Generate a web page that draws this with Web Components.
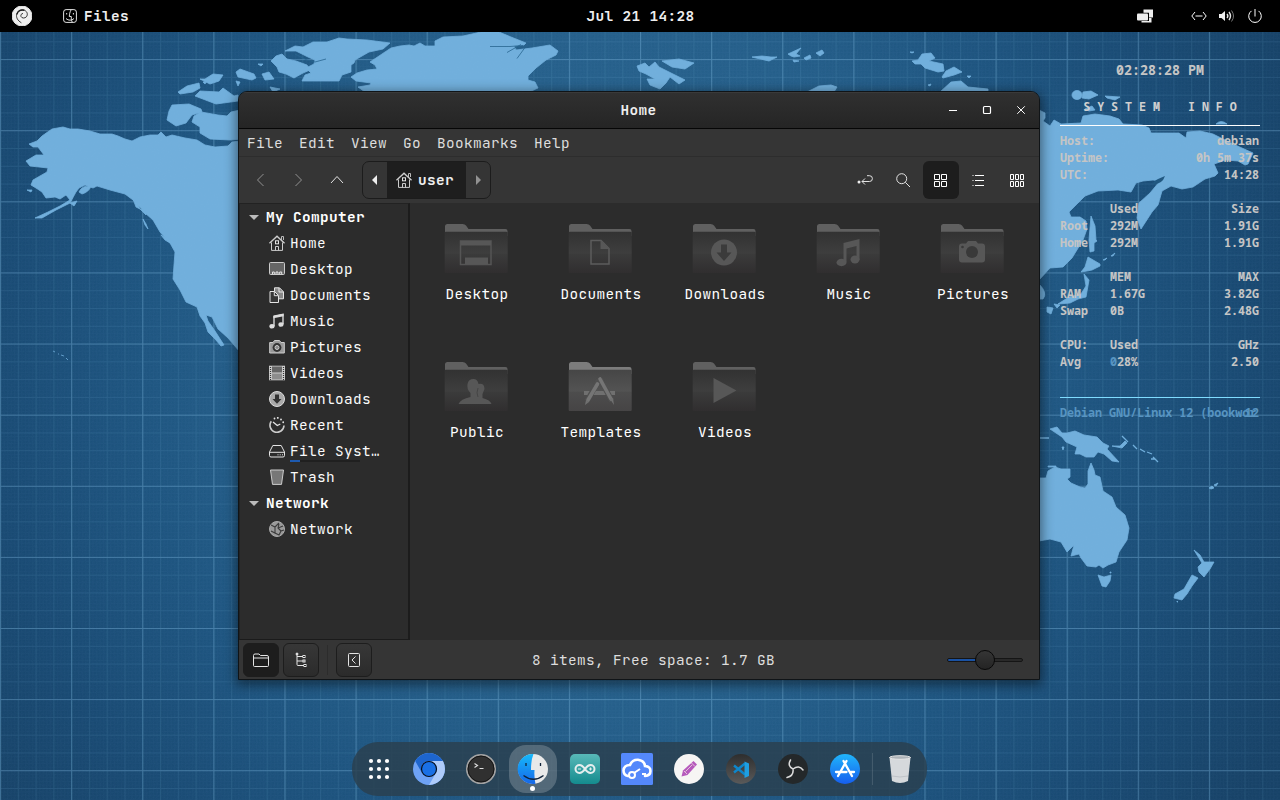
<!DOCTYPE html>
<html lang="en"><head><meta charset="utf-8"><title>Desktop</title>
<style>html,body{margin:0;width:1280px;height:800px;overflow:hidden;background:#1d527c;font:14.400px/20px "JetBrains Mono","DejaVu Sans Mono",monospace;letter-spacing:.36px;color:#eee}</style></head>
<body><desk-top></desk-top>
<script>
const define=(name,html)=>customElements.define(name,class extends HTMLElement{constructor(){super();this.attachShadow({mode:'open'}).innerHTML=typeof html==='function'?html(this):html}});

/* symbolic icons, 16-unit grid unless a view box is given */
const ICONS={
debian:[20,'<circle cx="10" cy="10" r="10" fill="#eee"/><path d="M9.400 16.800C5.500 14.500 4 11.500 4.700 8.200C5.700 4.800 9.500 3 12.700 4.400C15.500 5.700 16 8.800 14.400 10.800C13 12.500 9.700 12.400 9 10.500C8.500 8.800 9.500 7.500 11 7.500" fill="none" stroke="#222" stroke-width=".9"/><path d="M4.900 8.500C5.500 4.800 9 3.200 12.300 4.300" fill="none" stroke="#222" stroke-width="1.500"/>'],
finder:[14,'<rect x=".6" y=".6" width="12.800" height="12.800" rx="2.500"/><path d="M8 1C6.700 3.500 6.500 5 6.300 7.500H8.300C8.200 10 8.500 11.500 9.200 13M3 9.500C5.500 11.700 8.500 11.700 11 9.500M3.700 4v1.500M10.400 4v1.500"/>'],
screens:[16,'<path d="M6.500 1.500h9.500v8h-4V4.800H6.500zM4.500 13h7.500v-3h2.500v4.500h-10z" fill="#eee" stroke="none"/><rect x="0" y="5.500" width="11" height="7" rx="1" fill="#eee" stroke="none"/>'],
wired:[16,'<path d="M4 4L.8 8L4 12M12 4l3.200 4L12 12M4.500 8h7" stroke="#fff"/>'],
sound:[16,'<path d="M0 6h2.500L6 3v10L2.500 10H0z" fill="#eee" stroke="none"/><path d="M8 6q1.700 2 0 4M10 4q3 4 0 8" stroke-width="1.400"/><path d="M12.500 2.500q4 5.500 0 11" stroke="#777"/>'],
power:[14,'<path d="M3.500 1.900A6.300 6.300 0 1 0 10.500 1.900M7 0v7.500" stroke="#fff"/>'],
min:[16,'<path d="M4 8.500h8" stroke="#fff"/>'],
max:[16,'<rect x="4.500" y="4.500" width="7" height="7" rx="1" stroke="#fff" stroke-width="1.200"/>'],
close:[16,'<path d="M4.300 4.300l7.500 7.500M11.800 4.300l-7.500 7.500" stroke="#fff"/>'],
back:[16,'<path d="M10.500 2L4.500 8l6 6" stroke="#929292"/>'],
fwd:[16,'<path d="M4.500 2l6 6l-6 6" stroke="#929292"/>'],
up:[16,'<path d="M2 11l6-6.500l6 6.500"/>'],
pl:[10,'<path d="M7 0v10L2 5z" fill="#eee" stroke="none"/>'],
pr:[10,'<path d="M3 0v10l5-5z" fill="#929292" stroke="none"/>'],
home:[16,'<path d="M.4 8.300L8 1.200l7.600 7.100" stroke="#ccc" stroke-width="1.500"/><path d="M2.500 7.500v7.900h11V7.500M6.500 15.500v-4h3v4" stroke="#ccc"/><path d="M7 12h2v3H7z" fill="#2b2b2b" stroke="none"/><rect x="6.500" y="5.800" width="3" height="3"/><path d="M12.500 5V1.500h2V5" stroke="#bbb"/>'],
desk:[16,'<rect x=".5" y="1.500" width="15" height="12" rx="1" fill="#666" stroke="#ccc"/><path d="M3.500 13v-2h1.800v2M7 13v-2h2v2M10.700 13v-2h2v2"/>'],
docs:[16,'<path d="M5.500.8h5l4 4v7h-9z" fill="#888"/><path d="M10 1v4h4"/><path d="M1 4.500h4.500l4 4v7H1z" fill="#373737"/><path d="M5.300 4.700v4h4"/>'],
music:[16,'<path d="M5 13V3.500l9-2V11" stroke-width="1.300"/><path d="M4.400 2.500l10.200-2v2.800l-10.200 2z" fill="#ddd" stroke="none"/><ellipse cx="3" cy="13.200" rx="2.600" ry="2.300" fill="#ddd" stroke="none"/><ellipse cx="12" cy="11.500" rx="2.600" ry="2.300" fill="#ddd" stroke="none"/>'],
camera:[16,'<path d="M.7 3.500h3.300l1.500-2h5l1.500 2h3.300v10.500H.7z" fill="#999" stroke="#ccc"/><circle cx="8" cy="8.500" r="4.400" fill="#333" stroke="none"/><circle cx="8" cy="8.500" r="2" fill="#888" stroke="#ccc"/>'],
video:[16,'<path d="M0 .7h16v14.600H0z" fill="#ccc" stroke="none"/><path d="M3 1.500h10v6H3z" fill="#666" stroke="none"/><path d="M3 8.500h10v6H3z" fill="#8d8d8d" stroke="none"/><path d="M1.500 2v13M14.500 2v13" stroke="#333" stroke-width="1.200" stroke-dasharray="1 1"/>'],
down:[16,'<circle cx="8" cy="8" r="7.500" fill="#aaa" stroke="#ddd"/><path d="M6 3.500h4V8h2.500L8 12.700L3.500 8H6z" fill="#333" stroke="none"/>'],
recent:[16,'<path d="M2.300 4.200A7 7 0 1 0 15 8.500" stroke-width="1.600" stroke="#ccc"/><path d="M4 5l4.300 3.500l3-1.500" stroke-width="1.300"/><path d="M5.500 1.500v.1M8.800 .8v.1M12 2.500v.1M14.200 5.200v.1" stroke-width="1.800" stroke-linecap="round"/>'],
disk:[16,'<path d="M3.800 2.500h8.400L15.500 9v3.500q0 1.500-1.500 1.500H2Q.5 14 .5 12.500V9z"/><path d="M.8 9.300h14.400M8.500 11.800h1M10.700 11.800h1M13 11.800h1"/>'],
trash:[16,'<path d="M1.500 1h13l-2 14.400H3.500z" fill="#777" stroke="#ccc"/>'],
net:[16,'<circle cx="8" cy="8" r="7.500" fill="#999" stroke="#aaa"/><path d="M2 4l4 2l4-4M6 6v6l-4-2M6 12l4 2l2-4l3-1M10 3l-1 4l3 3M9 7l5-2" stroke="#3b3b3b" stroke-width="1.100"/>'],
path:[16,'<path d="M5 9.500h7.500a2.900 2.900 0 0 0 0-5.800H10M8 6.500l-3 3l3 3"/><circle cx="2" cy="10" r="1.500" fill="#eee" stroke="none"/>'],
search:[16,'<circle cx="6.700" cy="6.700" r="5"/><path d="M10.300 10.300l4.700 4.700"/>'],
grid4:[16,'<path d="M1.500 2.500h5v5h-5zM8.500 2.500h5v5h-5zM1.500 9.500h5v5h-5zM8.500 9.500h5v5h-5z" stroke="#fff"/>'],
list:[16,'<path d="M4 3.500h9M4 8.500h9M4 13.500h9M1.500 3.500h1M1.500 8.500h1M1.500 13.500h1" stroke="#fff"/>'],
grid6:[16,'<path d="M1.500 2.500h3v5h-3zM6.500 2.500h3v5h-3zM11.500 2.500h3v5h-3zM1.500 9.500h3v5h-3zM6.500 9.500h3v5h-3zM11.500 9.500h3v5h-3z" stroke="#fff"/>'],
folder:[16,'<path d="M.5 13V3.500q0-1.500 1.500-1.500h4l1.500 1.500H14q1.500 0 1.500 1.500v8.500q0 1-1 1H1.500q-1 0-1-1zM.5 6h15"/>'],
tree:[16,'<path d="M4 2v10.500q0 1 1 1h6M4 4.500h6M4 9h6"/><circle cx="4" cy="2" r="1" fill="#eee"/><rect x="10" y="3.500" width="2" height="2"/><rect x="10" y="8" width="2" height="2"/><rect x="11" y="12.500" width="2" height="2"/>'],
pane:[16,'<rect x="2.500" y="1.500" width="11" height="13" rx="1"/><path d="M9.500 4.500L6 8l3.500 3.500"/>']};
define('ui-icon',e=>{const [v,s]=ICONS[e.getAttribute('name')],z=e.getAttribute('size')||v;return `<style>:host{display:block;width:${z}px;height:${z}px;flex:none}svg{display:block}</style><svg width="${z}" height="${z}" viewBox="0 0 ${v} ${v}" fill="none" stroke="#e4e4e4">${s}</svg>`});

define('wall-paper',`<style>:host{display:block;width:1280px;height:800px}</style>
<svg width="1280" height="800"><defs>
<radialGradient id="g" gradientUnits="userSpaceOnUse" cx="610" cy="370" r="760"><stop offset="0" stop-color="#2b6690"/><stop offset=".45" stop-color="#255f8a"/><stop offset=".62" stop-color="#1e5580"/><stop offset=".82" stop-color="#194a73"/><stop offset="1" stop-color="#174267"/></radialGradient>
<pattern id="f" width="3.556" height="3.556" patternUnits="userSpaceOnUse" y="-12"><path d="M0 .5h4M.5 0v4" stroke="#79b4dc" stroke-opacity=".03"/></pattern>
<pattern id="q" width="17.778" height="17.778" patternUnits="userSpaceOnUse" y="-12"><path d="M0 .6h18M.6 0v18" stroke="#79b4dc" stroke-opacity=".11"/></pattern>
<pattern id="m" width="71.111" height="71.111" patternUnits="userSpaceOnUse" y="-12"><path d="M0 .6h72M.6 0v72" stroke="#8ac2e8" stroke-opacity=".3"/></pattern>
<filter id="n"><feTurbulence type="fractalNoise" baseFrequency=".7" numOctaves="2"/><feColorMatrix values="0 0 0 0 .4 0 0 0 0 .6 0 0 0 0 .8 .25 0 0 0 -.08"/></filter></defs>
<rect width="1280" height="800" fill="url(#g)"/><rect width="1280" height="800" fill="url(#f)"/><rect width="1280" height="800" fill="url(#q)"/><rect width="1280" height="800" fill="url(#m)"/>
<g fill="#71afdc" stroke="#71afdc" stroke-width=".8" stroke-linejoin="round">
<path d="M242 142L228 146 215 147 205 145 197 140 185 138 172 135 166 137 161 132 158 135 150 135 140 137 132 141 125 139 118 136 112 134 100 134 90 131 78 129 70 129 63 127 52 129 42 136 37 141 29 144 33 147 38 147 44 155 36 155 26 161 30 166 48 168 47 172 33 180 31 185 36 188 42 192 46 198 55 197 60 199 66 195 70 200 60 206 48 212 35 218 42 218 56 210 70 203 76 192 79 188 85 185 93 188 97 186 110 190 125 194 133 200 140 207 145 213 153 220 160 232 170 243 175 252 174 265 173 279 180 290 186 302 197 307 200 316 205 323 208 332 215 339 221 346 224 345 215 331 208 321 206 315 212 317 218 329 228 338 240 352Z"/>
<path d="M79 192q3-7 12-6-2 6-9 8zM70 203l7-2-3 5zM27 190l5 0-1 2z"/>
<path d="M161 235l12 6 5 6-3-1-10-6zM133 199l4 3 3 7-4-2zM140 209l5 1 1 5zM143 219l3 5 2 5-3-4z"/>
<path d="M172 105l17-1 12 5 1 3-10 3-6 8-10 3-9-6 2-9zM178 92l9-6 12-3 1 5-7 4-13 2zM200 79l5 0 8-5 10 1-4 6-9 3zM203 82l4-1-2 3zM236 72l4-3 14 5 2 4-4 2-14-3zM258 64l5 0-2 2zM262 74l7-2 5 7-9 1zM270 87l10 2-7 3zM195 96l5-5 19 1 4-4 11 8 4-1v6l-22 3zM240 110l-9 2-4 4-9-1-17-3-7 4-2 6 8 5 0 6 10 6 20 1 12-1zM240 141l-8 1-5 5 3 2 5-4 5-1zM236 81l4 1-2 4z"/>
<path d="M271 61l5-5 6-2 5 5 9 2 11 4 3 5-7 3-9 5-8-4-7-2-2-5z"/>
<path d="M285 51l10-5 8 1 10-5 14 0 12-4 8 1 20 1 23 3-7 6-14 3-14 8-1 3-3 2 0 7-9 3-3 6h-37l3-6 6-2-5-5 8-4 1-4-7-3-12-6z"/><path d="M295 54l12 6 8 2 11-3" fill="none" stroke="#27648f"/>
<path d="M391 48L400 46l9-1 5 1 6-3 5 3 10 0 0-5 8-4 20-1 18-4h18l12 5 15 6-2 2-10 1 2 4 16-2 18-3 8 6-2 4-10 5-10 8-8 8 0 4 7 2 3 6-9 4H365l-7-5 12-2 1-2-15-2-5-4 6-4 10-3 10-1-2-4-5-3z"/>
<path d="M490 46.500l20 0 13-1m-16 7l14-8m-4 14 8-11" fill="none" stroke="#27648f"/>
<path d="M637 66l8-3 4 4 6-5 4 5 8 4 10 5 8 4-6 4-9-7-4 6-6 6-10-4-3-6 8 0-9-5-7-3zM662 61l17-2 15 4-9 6-13-2zM752 57l10-1 9 1 6 0-8 4-13-3zM788 54l13-6-5 6 4 2-6 1-3-1zM793 60l6 1-5 1zM804 58l6-3 1 3-5 2zM816 53l6-3 2 3-4 3z"/><path d="M912 61l6-1 4-6 9-1 4 5-6 3 14 3 1 7-6 1-13-4-4-4-6 0zM942 77l4-6 8-4 8 5-8 3-11 3zM807 92l12-6 12-1 6 2-3 5zM940 92l11-10 10-1 7 6 20 2v3zM910 52l4 0-2 1zM967 76l4 0-2 2zM928 85l3-1-1 2z"/>
<path d="M1039 110L1045 113 1045 118 1043 121 1050 126 1054 120 1061 124 1081 123 1083 116 1095 114 1110 116 1119 119 1123 124 1142 125 1149 128 1151 133 1179 133 1186 138 1187 132 1200 131 1213 134 1233 144 1253 153 1248 164 1245 165 1238 161 1226 160 1214 164 1218 173 1215 176 1205 179 1193 187 1182 189 1171 186 1162 191 1158 205 1152 212 1141 229 1137 218 1139 203 1150 193 1160 181 1153 180 1143 181 1136 183 1131 192 1118 190 1098 191 1085 196 1069 212 1071 217 1080 217 1086 221 1087 229 1083 240 1072 258 1063 267 1050 268 1039 280Z"/><path d="M1165 176q-3 9-13 8 3-4 6-5z" fill="#205780" stroke="none"/>
<ellipse cx="1077" cy="95" rx="5" ry="4.500"/><path d="M1083 92l8-1 7 4-9 4-7-1zM1105 96l15 1-5 3-8-2zM1085 109l7-3 3 4-6 1zM1216 124q5-5 11 0zM1039 284q9 9 4 15h-4zM1091 216l4 10 1 14 1 1-3 2 0 8-4 1-1-12zM1088 257l12 7 0 2-8 4-5 1-6 1 4-5zM1084 274l5 6-3 17-8 2-8 4-12 1 11-7 12-3 5-8zM1047 307l6 1-2 6-4-2zM1054 304l6 1-3 3zM1103 260l4-2-2 2zM1111 256l4-3-2 3z"/>
<path d="M1050 429L1057 427 1062 433 1067 433 1075 431 1084 435 1097 437 1103 443 1109 446 1107 449 1119 462 1112 461 1104 454 1098 452 1094 457 1086 457 1080 454 1075 454 1077 447 1066 442 1062 437ZM1112 446l8 0 5-5 2 2-5 5zM1062 447l2 0-1 3z"/><path d="M1122 436l6 6m5 3l4 4m3 0l5 3m2 0 5 2m1 3 5 5m-7-3 4 0M1039 438h10" fill="none" stroke-width="1.300"/>
<path d="M1039 478L1046 478 1048 471 1055 467 1061 469 1070 469 1070 477 1067 479 1071 483 1080 487 1085 488 1088 484 1088 471 1091 463 1094 470 1095 475 1100 477 1103 491 1112 497 1116 507 1125 515 1129 528 1127 540 1119 552 1116 562 1108 565 1103 568 1099 565 1096 567 1087 566 1081 558 1079 554 1071 556 1074 545 1067 552 1061 542 1050 539 1039 541ZM1048 466h8v1h-8zM1098 575l6 2 7-2-1 6-4 6-4-1zM1110 572h1v1h-1z"/>
<path d="M1194 550L1200 555 1204 562 1214 562 1210 569 1204 577 1199 572 1198 567 1202 563ZM1192 575L1198 578 1192 586 1187 594 1182 600 1174 598 1175 594 1184 589 1188 582ZM1209 488l3-2 2 2-3 1zM1214 485l4-2-2 3zM1177 601l1 1-1 0z"/>
<path d="M53 351l2 1m3 2l1 0m2 1 3 1m2 2 2 2" fill="none"/>
</g><rect width="1280" height="800" filter="url(#n)" opacity=".2"/></svg>`);

define('top-bar',`<style>:host{display:flex;align-items:center;height:32px;background:#000;font-weight:bold;box-sizing:border-box;padding:0 18px 0 12px}
.l,.r{display:flex;align-items:center;flex:1 1 0}.l{margin-right:7px}.r{justify-content:flex-end}.f{margin:0 7px 0 31px}.w{margin-left:38px}.s{margin-left:12px}.p{margin-left:13px}</style>
<div class="l"><ui-icon name="debian"></ui-icon><ui-icon class="f" name="finder"></ui-icon><span>Files</span></div><time>Jul 21 14:28</time>
<div class="r"><ui-icon name="screens"></ui-icon><ui-icon class="w" name="wired"></ui-icon><ui-icon class="s" name="sound"></ui-icon><ui-icon class="p" name="power"></ui-icon></div>`);

define('info-row',e=>`<style>:host{display:grid;grid-template-columns:50px 1fr auto;height:17px;white-space:nowrap}b{color:#5794c1}</style><span>${e.getAttribute('a')||''}</span><span>${e.getAttribute('b')||''}</span><span>${e.getAttribute('c')||''}</span>`);
define('sys-info',`<style>:host{display:block;width:200px;font:bold 11.700px/17px "Noto Sans Mono","DejaVu Sans Mono",monospace;letter-spacing:0;color:#c5c5c5}
.t{text-align:center;font-size:13.300px;height:20px;line-height:20px}.h{white-space:pre;text-align:center;margin-top:18px;line-height:17px;height:17px;letter-spacing:-.03px;color:#d0d0d0}
.hr{height:1px;background:#fff;margin:10px 0 6px}.e{height:17px}.b{background:#7fdcff;margin:27px 0 6px}info-row{margin-right:1px}.d{display:grid;color:#5794c1;white-space:nowrap;margin-right:1px}.d span{grid-area:1/1}.d span+span{justify-self:end}</style>
<div class="t">02:28:28 PM</div><div class="h">S Y S T E M    I N F O</div><div class="hr"></div>
<info-row a="Host:" c="debian"></info-row><info-row a="Uptime:" c="0h 5m 37s"></info-row><info-row a="UTC:" c="14:28"></info-row><div class="e"></div>
<info-row b="Used" c="Size"></info-row><info-row a="Root" b="292M" c="1.91G"></info-row><info-row a="Home" b="292M" c="1.91G"></info-row><div class="e"></div>
<info-row b="MEM" c="MAX"></info-row><info-row a="RAM" b="1.67G" c="3.82G"></info-row><info-row a="Swap" b="0B" c="2.48G"></info-row><div class="e"></div>
<info-row a="CPU:" b="Used" c="GHz"></info-row><info-row a="Avg" b="&lt;b&gt;0&lt;/b&gt;28%" c="2.50"></info-row><div class="hr b"></div>
<div class="d"><span>Debian GNU/Linux 12 (bookwor</span><span>12</span></div>`);

define('side-item',e=>`<style>:host{display:flex;align-items:center;height:26px;padding-left:29px;gap:5px;color:#fafafa}.n{position:relative;white-space:nowrap}.u{position:absolute;left:0;top:19px;width:70px;height:2px;background:linear-gradient(90deg,#1d5ab0 10px,#202020 10px)}</style><ui-icon name="${e.getAttribute('icon')}"></ui-icon><span class="n"><slot></slot>${e.hasAttribute('usage')?'<i class="u"></i>':''}</span>`);
define('side-head',`<style>:host{display:flex;align-items:center;height:26px;padding-left:9px;gap:7px;font-weight:bold;color:#fff}i{border:5px solid transparent;border-top-color:#bbb;border-bottom:0}</style><i></i><span><slot></slot></span>`);

const G={
desktop:'<path d="M16.500 18h30.500v23.500H16.500z" fill="none" stroke="#555" stroke-width="1.500"/><path d="M16.500 18h30.500v4.500H16.500zM21 34.500h23v7H21z"/>',
documents:'<path d="M23 17.500h10l8 8v15.500h-18z" fill="none" stroke="#5c5c5c" stroke-width="1.500"/><path d="M32.500 17l9 9h-9z"/>',
downloads:'<circle cx="32" cy="29.500" r="13"/><path d="M29 21.500h6v8h4.500L32 38l-7.500-8.500H29z" fill="#3b3b3b"/>',
music:'<path d="M27.500 20l16-4v21h-3V23l-10 2.500V39h-3z"/><ellipse cx="25.500" cy="39.500" rx="5" ry="3.700"/><ellipse cx="39" cy="36.500" rx="4.500" ry="4"/>',
pictures:'<path d="M22 20.500h4l2-2.500h8l2 2.500h4q3 0 3 3v13q0 3-3 3H22q-3 0-3-3v-13q0-3 3-3z"/><circle cx="32" cy="29" r="6" fill="#393939"/><circle cx="22.500" cy="24" r="1.300" fill="#393939"/>',
public:'<path d="M14.500 43q2-5 12-7v-4q-4-4-3-9 1-5 6-5 4 0 5 5 6-1 6 5l-2 5v4q8 2 9 6z"/><path d="M34 27q-2 5 0 9" stroke="#454545" fill="none"/>',
templates:'<path d="M16 30h31v4H16z"/><path d="M19 40l12-21M44 40L32 18" stroke="#505050" stroke-width="5.500"/><path d="M20 39l9.500-16M43 38L32 18" stroke="#757575" stroke-width="3.600" stroke-linecap="round"/><path d="M17 44l1-5 3 2zM42 38l4 6-1-7z"/>',
videos:'<path d="M21.500 17v25l23-12.500z"/>'};
define('folder-item',e=>{const k=e.getAttribute('kind'),t=k=='templates';return `<style>:host{display:flex;flex-direction:column;align-items:center;height:138px}svg{display:block;margin-top:19px}span{margin-top:9px;padding-left:2px}</style>
<svg width="64" height="53" viewBox="0 0 64 53"><defs><linearGradient id="x" x2="0" y2="1"><stop stop-color="${t?'#464646':'#323232'}"/><stop offset=".52" stop-color="${t?'#535353':'#3e3e3e'}"/><stop offset=".54" stop-color="${t?'#4d4d4d':'#3b3b3b'}"/><stop offset="1" stop-color="${t?'#464445':'#302e2f'}"/></linearGradient></defs>
<path d="M1 10V4.500Q1 2 3.500 2H18.500q2.500 0 3.500 1.500L24.500 7H61.500q2 0 2 2v5H1z" fill="${t?'#7c7c7c':'#606060'}"/><path d="M.7 10.500q0-.8 1-.8h60.500q1.500 0 1.500 1V50q0 1-1 1H1.700Q.7 51 .7 50z" fill="url(#x)"/><g transform="translate(0 1)" fill="${t?'#707070':'#575757'}">${G[k]}</g></svg><span><slot></slot></span>`});

define('file-window',`<style>:host{display:flex;flex-direction:column;width:800px;height:587px;border:1px solid #101417;border-radius:9px 9px 0 0;overflow:hidden;background:#2c2c2c;box-shadow:0 3px 12px 2px #0007;background-clip:padding-box}
.title{height:37px;display:grid;grid-template-columns:119px 1fr 120px;align-items:center;background:linear-gradient(#303030,#252525);box-shadow:inset 0 1px #3a3a3a;text-align:center;font-weight:bold;border-bottom:1px solid #060606;box-sizing:border-box;flex:none}
.wb{display:flex;gap:18px;padding-left:26px}.m{display:flex;gap:16px;height:28px;padding:1px 8px 0;align-items:center;background:#353535;border-bottom:1px solid #2d2d2d;box-sizing:border-box;color:#ddd}
.tb{height:46px;background:#353535;display:flex;align-items:center;padding:0 4px;gap:2px;box-sizing:border-box}.b{width:36px;height:38px;display:flex;align-items:center;justify-content:center;border-radius:6px;flex:none}.on{background:#1d1d1d}
.pb{margin-left:5px;display:flex;height:38px;width:129px;box-sizing:border-box;border:1px solid #1c1c1c;border-radius:7px;overflow:hidden;margin-right:auto;font-weight:bold}.pb>div{display:flex;align-items:center;justify-content:center;width:24px}.pb .c{width:79px;gap:6px;background:#1e1e1e;padding-right:3px;box-sizing:border-box}
.main{display:flex;flex:1;min-height:0}.side{width:168px;border-right:2px solid #1c1c1c;border-left:1px solid #222;border-top:1px solid #222;border-bottom:1px solid #1b1b1b;display:flex;flex-direction:column}
.grid{flex:1;display:grid;grid-template-columns:repeat(5,124px);grid-auto-rows:138px;padding-left:4px;color:#fff}
.st{height:39px;flex:none;background:#353535;display:grid;grid-template-columns:133px 1fr 92px;align-items:center}.sb{display:flex;padding-left:4px;gap:4px}.sb .b{height:34px;box-sizing:border-box;border:1px solid #1d1d1d;background:linear-gradient(#373737,#2b2b2b)}.sb .b.on{background:#1d1d1d}.sb .k{margin-left:13px;position:relative}.k:before{content:"";position:absolute;left:-10px;top:1px;height:30px;border-left:1px solid #2c2c2c}.x{text-align:center;padding-right:12px;padding-top:1px;color:#ddd}
.sl{height:4px;width:76px;border-radius:3px;box-sizing:border-box;border:1px solid #151515;background:linear-gradient(90deg,#1a52a3 38px,#292929 38px);position:relative}.sl:after{content:"";position:absolute;left:27px;top:-9px;width:18px;height:18px;border:1px solid #080808;border-radius:50%;background:linear-gradient(#353535,#242424)}</style>
<div class="title"><i></i><span>Home</span><div class="wb"><ui-icon name="min"></ui-icon><ui-icon name="max"></ui-icon><ui-icon name="close"></ui-icon></div></div>
<div class="m"><span>File</span><span>Edit</span><span>View</span><span>Go</span><span>Bookmarks</span><span>Help</span></div>
<div class="tb"><div class="b"><ui-icon name="back"></ui-icon></div><div class="b"><ui-icon name="fwd"></ui-icon></div><div class="b"><ui-icon name="up"></ui-icon></div><div class="pb"><div><ui-icon name="pl"></ui-icon></div><div class="c"><ui-icon name="home"></ui-icon><span>user</span></div><div><ui-icon name="pr"></ui-icon></div></div>
<div class="b"><ui-icon name="path"></ui-icon></div><div class="b"><ui-icon name="search"></ui-icon></div><div class="b on"><ui-icon name="grid4"></ui-icon></div><div class="b"><ui-icon name="list"></ui-icon></div><div class="b"><ui-icon name="grid6"></ui-icon></div></div>
<div class="main"><div class="side"><slot name="side"></slot></div><div class="grid"><slot></slot></div></div>
<div class="st"><div class="sb"><div class="b on"><ui-icon name="folder"></ui-icon></div><div class="b"><ui-icon name="tree"></ui-icon></div><div class="b k"><ui-icon name="pane"></ui-icon></div></div><span class="x">8 items, Free space: 1.7 GB</span><div class="sl"></div></div>`);

const APPS={
grid:'<g fill="#fff">'+[8,16,24].map(y=>[8,16,24].map(x=>`<circle cx="${x}" cy="${y}" r="2.100"/>`).join('')).join('')+'</g>',
chromium:'<circle cx="16" cy="16" r="16" fill="#6ea2f5"/><path d="M2.200 8A16 16 0 0 1 29.800 8H16a8 8 0 0 0-7 12z" fill="#1d65ce"/><path d="M29.800 8A16 16 0 0 1 16 32L23 20A8 8 0 0 0 16 8z" fill="#aecbfa"/><circle cx="16" cy="16" r="7.500" fill="#1a70e5" stroke="#07101e" stroke-width="1.200"/>',
term:'<circle cx="16" cy="16" r="14.200" fill="#303030" stroke="#a3a3a3" stroke-width="1.700"/><circle cx="16" cy="16" r="13" fill="none" stroke="#151515"/><path d="M9.500 10.500l3 2-3 2M14.500 15.500h4" fill="none" stroke="#ddd" stroke-width="1.200"/>',
finder:'<defs><linearGradient id="b" x2="0" y2="1"><stop stop-color="#16b9fb"/><stop offset="1" stop-color="#1667e8"/></linearGradient></defs><circle cx="16" cy="16" r="15" fill="#e9e9e9"/><path d="M16.500 1A15 15 0 1 0 18.500 30.700Q17 25 17.500 17H14Q14 7 16.500 1z" fill="url(#b)"/><path d="M6.500 22.500q10 7.500 20 0" fill="none" stroke="#10233a" stroke-width="1.300"/><path d="M9 10v3M23.500 10v3" stroke="#10233a" stroke-width="1.300"/>',
arduino:'<defs><linearGradient id="a" x2="0" y2="1"><stop stop-color="#58b8b8"/><stop offset="1" stop-color="#148b8e"/></linearGradient></defs><rect x="1" y="1" width="30" height="30" rx="5" fill="url(#a)"/><path d="M16 16C13.500 12.500 11.700 12 10.500 12A4 4 0 0 0 10.500 20C12 20 14 19 16 16C18 13 20 12 21.500 12A4 4 0 0 1 21.500 20C20 20 18 19 16 16z" fill="none" stroke="#e5eeee" stroke-width="2"/><path d="M9 16h3M20 16h3M21.500 14.500v3" stroke="#e5eeee"/>',
cloud:'<rect width="32" height="32" rx="1.500" fill="#5488fb"/><path d="M7 23Q2.500 22 2.500 17.500Q3 12 9 12Q11 6.500 17 6.700Q23.500 7.500 24 13Q29.500 13.500 29.500 18Q29.500 22.500 24 23" fill="none" stroke="#fff" stroke-width="2.600" stroke-linecap="round"/><circle cx="11" cy="22" r="3" fill="none" stroke="#fff" stroke-width="2"/><path d="M13 20l6-4M21 21h4" fill="none" stroke="#fff" stroke-width="2"/>',
pencil:'<circle cx="16" cy="16" r="15" fill="#f6f5f4"/><path d="M8.500 23.500l1.500-6L20.500 8l3.500 3.500-9.500 10.500z" fill="#b65abd"/><path d="M11 18l3 3M18.500 10l3.500 3.500M12.500 18.500l6.500-6.500" stroke="#edd" stroke-width=".8"/>',
code:'<defs><linearGradient id="k" x2="0" y2="1"><stop stop-color="#2e2e2e"/><stop offset="1" stop-color="#5a5a5a"/></linearGradient></defs><circle cx="16" cy="16" r="15" fill="url(#k)"/><path d="M9 12.500l11 9M9 19.500L20 10.500" stroke="#0e86ca" stroke-width="2.400"/><path d="M19.500 8.500l4.500 2v12.500l-4.500 2z" fill="#1f9ee0"/>',
obs:'<circle cx="16" cy="16" r="15" fill="#24282a"/><g fill="none" stroke="#ddd" stroke-width="1.500" stroke-linecap="round"><path d="M16 16Q10 13 13.500 7M16 16Q22 11.500 26 17M16 16Q17 23 10 24.500"/></g>',
store:'<defs><linearGradient id="s" x2="0" y2="1"><stop stop-color="#20b5fb"/><stop offset="1" stop-color="#165eee"/></linearGradient></defs><circle cx="16" cy="16" r="15" fill="url(#s)"/><path d="M9 23l8.500-15M14.500 8l8.500 15M7 19h10.500M22 19h3" stroke="#fff" stroke-width="2.300" stroke-linecap="round"/>',
bin:'<path d="M5.500 4.500h21L24 28q-8 4-16 0z" fill="#d6d9dc"/><ellipse cx="16" cy="4.500" rx="10.500" ry="1.800" fill="#aeb3b8" stroke="#e5e5e5"/><path d="M8 23q8 2 16 0" stroke="#bfc3c8" fill="none"/>'};
define('app-icon',e=>`<style>:host{display:flex;width:48px;height:48px;align-items:center;justify-content:center;border-radius:17px;position:relative}:host([active]){background:#ffffff33}:host([active]):after{content:"";position:absolute;width:5px;height:5px;border-radius:50%;background:#fff;top:41px;left:21px}</style><svg width="32" height="32">${APPS[e.getAttribute('name')]}</svg>`);
define('dock-bar',`<style>:host{display:flex;height:54px;width:575px;box-sizing:border-box;padding:3px;border-radius:26px;background:#2b3e4ccc}.a{display:flex;gap:4px;margin-left:2px}.s{width:1px;height:32px;background:#ffffff20;margin:8px 3px 0}</style><app-icon name="grid"></app-icon><div class="a">${['chromium','term','finder','arduino','cloud','pencil','code','obs','store'].map(n=>`<app-icon name="${n}"${n=='finder'?' active':''}></app-icon>`).join('')}</div><i class="s"></i><app-icon name="bin"></app-icon>`);

define('desk-top',`<style>:host{display:block;position:relative;width:1280px;height:800px}wall-paper,sys-info,file-window,dock-bar{position:absolute}top-bar{position:relative}wall-paper{left:0;top:0}sys-info{left:1060px;top:60px}file-window{left:238px;top:91px}dock-bar{left:352px;top:742px}</style>
<wall-paper></wall-paper><top-bar></top-bar><sys-info></sys-info><file-window>
<side-head slot="side">My Computer</side-head>${[['home','Home'],['desk','Desktop'],['docs','Documents'],['music','Music'],['camera','Pictures'],['video','Videos'],['down','Downloads'],['recent','Recent'],['disk','File Syst…'],['trash','Trash']].map(([i,t])=>`<side-item slot="side" icon="${i}"${i=='disk'?' usage':''}>${t}</side-item>`).join('')}<side-head slot="side">Network</side-head><side-item slot="side" icon="net">Network</side-item>
${['Desktop','Documents','Downloads','Music','Pictures','Public','Templates','Videos'].map(t=>`<folder-item kind="${t.toLowerCase()}">${t}</folder-item>`).join('')}</file-window><dock-bar></dock-bar>`);
</script></body></html>
